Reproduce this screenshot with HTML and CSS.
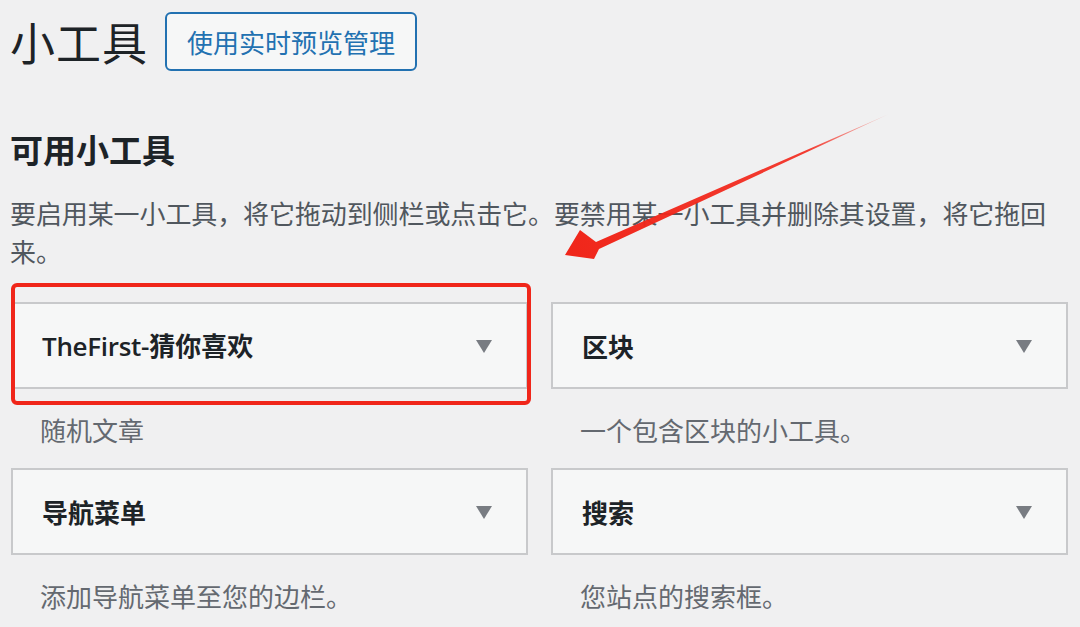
FILE: index.html
```html
<!DOCTYPE html>
<html lang="zh-CN">
<head>
<meta charset="utf-8">
<title>小工具</title>
<link rel="stylesheet" href="styles.css">
</head>
<body>
<div class="wrap">
  <div class="page-header">
    <h1 class="page-title">小工具</h1>
    <a class="page-action" href="#">使用实时预览管理</a>
  </div>
  <h2 class="section-title">可用小工具</h2>
  <p class="section-desc">要启用某一小工具，将它拖动到侧栏或点击它。要禁用某一小工具并删除其设置，将它拖回来。</p>
  <div class="widget-grid">
    <div class="widget">
      <div class="widget-top"><h3 class="widget-title"><span class="latin">TheFirst-</span>猜你喜欢</h3><span class="toggle"></span></div>
      <div class="widget-description">随机文章</div>
    </div>
    <div class="widget">
      <div class="widget-top"><h3 class="widget-title">区块</h3><span class="toggle"></span></div>
      <div class="widget-description">一个包含区块的小工具。</div>
    </div>
    <div class="widget">
      <div class="widget-top"><h3 class="widget-title">导航菜单</h3><span class="toggle"></span></div>
      <div class="widget-description">添加导航菜单至您的边栏。</div>
    </div>
    <div class="widget">
      <div class="widget-top"><h3 class="widget-title">搜索</h3><span class="toggle"></span></div>
      <div class="widget-description">您站点的搜索框。</div>
    </div>
  </div>
  <div class="highlight-box"></div>
  <svg class="annot-arrow" width="1080" height="627" viewBox="0 0 1080 627">
    <defs>
      <linearGradient id="fade" x1="888" y1="114" x2="566" y2="255" gradientUnits="userSpaceOnUse">
        <stop offset="0" stop-color="#f3281c" stop-opacity="0.15"/>
        <stop offset="0.25" stop-color="#f3281c" stop-opacity="0.9"/>
        <stop offset="1" stop-color="#f0261a"/>
      </linearGradient>
    </defs>
    <polygon points="889,114 596,242 580,230 565,255 594,259 599,249" fill="url(#fade)"/>
  </svg>
</div>
</body>
</html>
```
FILE: styles.css
```css
html, body {
  margin: 0;
  padding: 0;
  background: #f0f0f1;
}
body {
  font-family: "Noto Sans CJK SC", "Noto Sans", sans-serif;
  color: #1d2327;
  width: 1080px;
  height: 627px;
  overflow: hidden;
}
.wrap {
  position: relative;
  padding: 12px 11px 0 10px;
  height: 627px;
  box-sizing: border-box;
}
.page-header {
  display: flex;
  align-items: center;
  height: 59px;
}
.page-title {
  margin: 0;
  font-size: 45px;
  font-weight: 400;
  line-height: 59px;
  color: #1d2327;
  letter-spacing: 1px;
}
.page-action {
  margin-left: 17px;
  height: 59px;
  box-sizing: border-box;
  padding: 0 20px;
  display: flex;
  align-items: center;
  border: 2px solid #2271b1;
  border-radius: 6px;
  background: #f6f7f7;
  color: #2271b1;
  font-size: 26px;
  text-decoration: none;
}
.section-title {
  margin: 56px 0 0 0;
  font-size: 33px;
  font-weight: 700;
  line-height: 44px;
  color: #1d2327;
}
.section-desc {
  margin: 23px 0 0 0;
  font-size: 26px;
  line-height: 38px;
  color: #50575e;
  letter-spacing: -0.1px;
}
.widget-grid {
  margin: 32px 0 0 1px;
  display: grid;
  grid-template-columns: 517px 517px;
  column-gap: 23px;
  row-gap: 23px;
}
.widget-top {
  height: 87px;
  box-sizing: border-box;
  border: 2px solid #c8c9cb;
  background: #f6f7f7;
  display: flex;
  align-items: center;
  justify-content: space-between;
  padding: 0 34px 0 29px;
}
.widget-title {
  margin: 0;
  font-size: 26px;
  font-weight: 700;
  line-height: 36px;
  color: #1d2327;
}
.widget-title .latin {
  font-family: "Open Sans", "Noto Sans", sans-serif;
  font-weight: 600;
  letter-spacing: -0.3px;
}
.toggle {
  width: 0;
  height: 0;
  border-left: 8px solid transparent;
  border-right: 8px solid transparent;
  border-top: 13px solid #787c82;
  margin-top: 2px;
}
.widget-description {
  padding: 26px 0 0 29px;
  font-size: 26px;
  line-height: 30px;
  color: #646970;
}
.highlight-box {
  position: absolute;
  left: 11px;
  top: 283px;
  width: 520px;
  height: 122px;
  box-sizing: border-box;
  border: 4px solid #f0261a;
  border-radius: 6px;
}
.annot-arrow {
  position: absolute;
  left: 0;
  top: 0;
  pointer-events: none;
}
```
